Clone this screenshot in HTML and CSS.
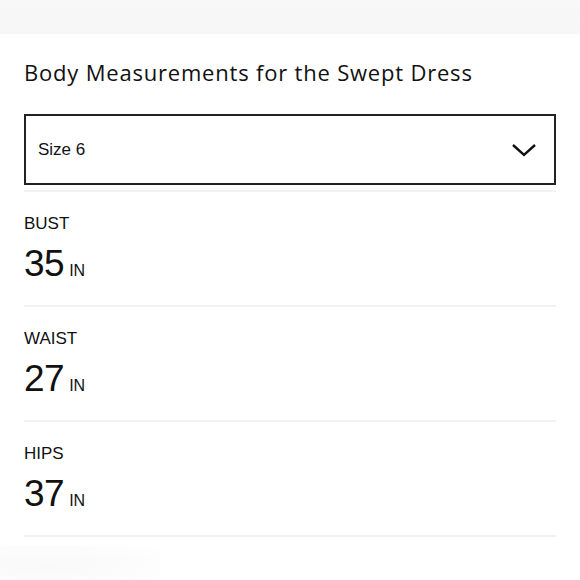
FILE: index.html
```html
<!DOCTYPE html>
<html>
<head>
<meta charset="utf-8">
<link rel="stylesheet" href="styles.css">
</head>
<body>
<div class="topband"></div>
<main class="panel">
  <h1 class="title">Body Measurements for the Swept Dress</h1>
  <div class="select">
    <span class="select-value">Size 6</span>
    <svg class="chevron" width="26" height="16" viewBox="0 0 26 16"><path d="M2 3 L13 13 L24 3" fill="none" stroke="#111" stroke-width="2.4"/></svg>
  </div>
  <div class="rule"></div>
  <section class="row">
    <div class="label">BUST</div>
    <div class="value"><span class="num">35</span><span class="unit">IN</span></div>
  </section>
  <section class="row">
    <div class="label">WAIST</div>
    <div class="value"><span class="num">27</span><span class="unit">IN</span></div>
  </section>
  <section class="row">
    <div class="label">HIPS</div>
    <div class="value"><span class="num">37</span><span class="unit">IN</span></div>
  </section>
</main>
<div class="bottomblob"></div>
</body>
</html>
```

FILE: styles.css
```css
html, body {
  margin: 0;
  padding: 0;
  background: #ffffff;
  color: #111111;
}
body {
  width: 580px;
  height: 580px;
  overflow: hidden;
  font-family: "Liberation Sans", Arial, sans-serif;
}
.topband {
  height: 34px;
  background: linear-gradient(180deg, #f8f8f8 0%, #f6f6f6 100%);
}
.panel {
  padding: 0 24px;
}
.title {
  margin: 24px 0 0 0;
  font-family: "Open Sans", "Noto Sans", sans-serif;
  font-weight: 500;
  font-size: 22px;
  letter-spacing: 0.8px;
  line-height: 28px;
  color: #111111;
}
.select {
  margin-top: 28px;
  height: 67px;
  border: 2px solid #222;
  display: flex;
  align-items: center;
  justify-content: space-between;
  padding: 0 17px 0 12px;
}
.select-value {
  font-size: 17px;
  color: #111;
}
.rule {
  margin-top: 5px;
  height: 2px;
  background: #f2f2f2;
}
.row {
  border-bottom: 2px solid #f1f1f1;
  padding-top: 22px;
  height: 91px;
}
.label {
  font-size: 17px;
  line-height: 20px;
  color: #111;
}
.value {
  margin-top: 10px;
  display: flex;
  align-items: baseline;
}
.num {
  font-size: 37px;
  line-height: 40px;
  letter-spacing: -0.5px;
}
.unit {
  font-size: 16px;
  margin-left: 5px;
}
.bottomblob {
  position: absolute;
  left: 0;
  top: 545px;
  width: 160px;
  height: 35px;
  background: radial-gradient(ellipse at 30% 60%, #f9f9f9 0%, #fcfcfc 60%, #ffffff 100%);
}
```
